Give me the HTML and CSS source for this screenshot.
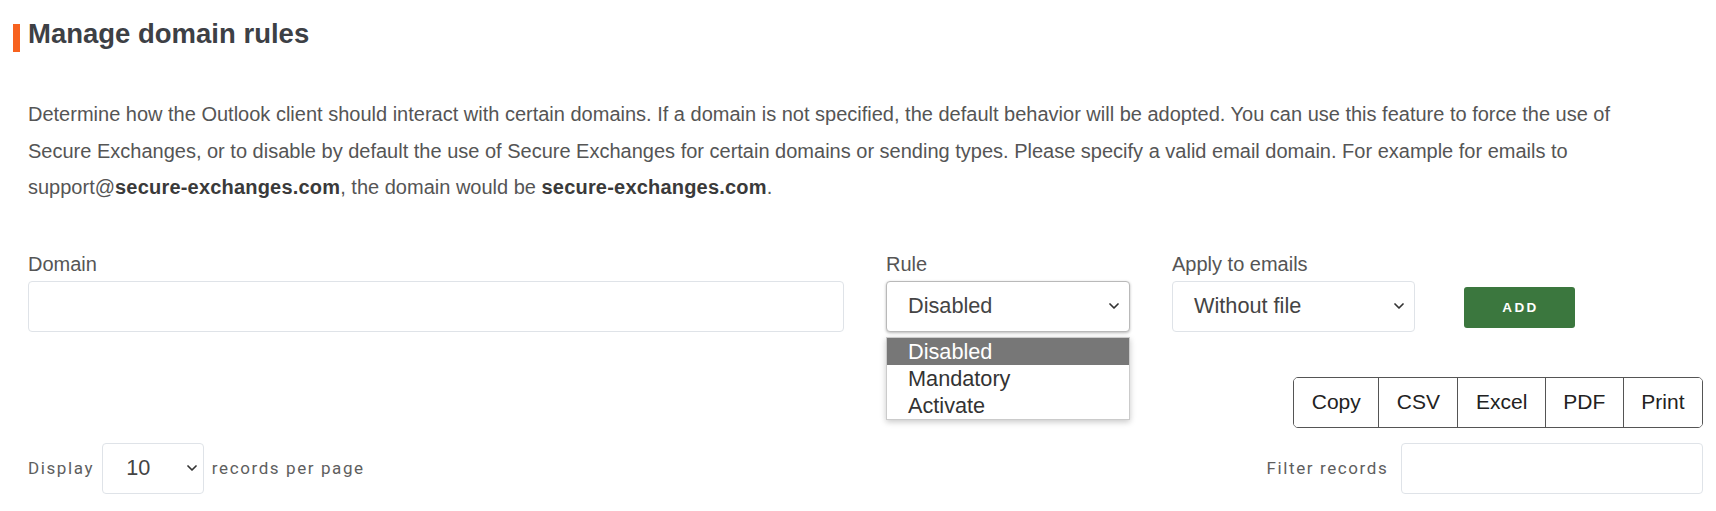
FILE: index.html
```html
<!DOCTYPE html>
<html lang="en">
<head>
<meta charset="utf-8">
<title>Manage domain rules</title>
<link rel="stylesheet" href="styles.css">
</head>
<body>
<div class="page">
  <h2 class="title">Manage domain rules</h2>
  <p class="intro">Determine how the Outlook client should interact with certain domains. If a domain is not specified, the default behavior will be adopted. You can use this feature to force the use of Secure Exchanges, or to disable by default the use of Secure Exchanges for certain domains or sending types. Please specify a valid email domain. For example for emails to support@<b>secure-exchanges.com</b>, the domain would be <b>secure-exchanges.com</b>.</p>

  <div class="form-row">
    <div class="field field-domain">
      <label class="label">Domain</label>
      <div class="input"></div>
    </div>
    <div class="field field-rule">
      <label class="label">Rule</label>
      <div class="select select-open">
        <span>Disabled</span>
        <svg class="chev" width="10" height="6" viewBox="0 0 10 6"><path d="M1 1 L5 5 L9 1" fill="none" stroke="#333" stroke-width="1.7" stroke-linecap="round" stroke-linejoin="round"/></svg>
      </div>
      <ul class="dropdown">
        <li class="active">Disabled</li>
        <li>Mandatory</li>
        <li>Activate</li>
      </ul>
    </div>
    <div class="field field-apply">
      <label class="label">Apply to emails</label>
      <div class="select">
        <span>Without file</span>
        <svg class="chev" width="10" height="6" viewBox="0 0 10 6"><path d="M1 1 L5 5 L9 1" fill="none" stroke="#333" stroke-width="1.7" stroke-linecap="round" stroke-linejoin="round"/></svg>
      </div>
    </div>
    <button class="btn-add">ADD</button>
  </div>

  <div class="export-row">
    <div class="btn-group">
      <button class="btn">Copy</button>
      <button class="btn">CSV</button>
      <button class="btn">Excel</button>
      <button class="btn">PDF</button>
      <button class="btn">Print</button>
    </div>
  </div>

  <div class="table-controls">
    <div class="length">
      <span>Display</span>
      <div class="select select-sm">
        <span>10</span>
        <svg class="chev" width="10" height="6" viewBox="0 0 10 6"><path d="M1 1 L5 5 L9 1" fill="none" stroke="#333" stroke-width="1.7" stroke-linecap="round" stroke-linejoin="round"/></svg>
      </div>
      <span>records per page</span>
    </div>
    <div class="filter">
      <span>Filter records</span>
      <div class="input input-filter"></div>
    </div>
  </div>
</div>
</body>
</html>
```

FILE: styles.css
```css
* { box-sizing: border-box; }

body {
  margin: 0;
  background: #fff;
  font-family: "Liberation Sans", Arial, sans-serif;
  color: #555;
}

.page {
  padding: 24px 13px 0 28px;
}

.title {
  margin: 0 0 0 -15px;
  padding: 0 0 8.5px 8px;
  border-left: 7px solid #f7621f;
  font-size: 27.5px;
  line-height: 19.5px;
  font-weight: bold;
  color: #3d4045;
}

.intro {
  margin: 44px 0 0;
  padding-right: 40px;
  font-size: 20px;
  line-height: 36.5px;
  color: #555;
}

.intro b {
  color: #3a3a3a;
  letter-spacing: 0.2px;
}

.form-row {
  margin-top: 46.5px;
  display: flex;
  align-items: flex-end;
}

.field {
  display: flex;
  flex-direction: column;
}

.label {
  display: block;
  font-size: 20px;
  line-height: 24px;
  margin-bottom: 4.5px;
  color: #555;
}

.field-domain { width: 816px; margin-right: 42px; }
.field-rule { width: 244px; margin-right: 42px; position: relative; }
.field-apply { width: 243px; margin-right: 49px; }

.input {
  height: 51px;
  border: 1px solid #dfe3e8;
  border-radius: 4px;
  background: #fff;
}

.select {
  height: 51px;
  border: 1px solid #dfe3e8;
  border-radius: 4px;
  background: #fff;
  display: flex;
  align-items: center;
  justify-content: space-between;
  padding: 0 10px 0 21px;
  font-size: 21.7px;
  color: #444;
}

.select-open {
  border-color: #b9b9b9;
  box-shadow: 0 1px 3px rgba(0, 0, 0, 0.28);
}

.chev { display: block; flex: none; }

.dropdown {
  position: absolute;
  top: calc(100% + 5px);
  left: 0;
  right: 0;
  margin: 0;
  padding: 0;
  list-style: none;
  background: #fff;
  border: 1px solid #cbcbcb;
  box-shadow: 0 2px 6px rgba(0, 0, 0, 0.22);
  z-index: 5;
}

.dropdown li {
  height: 27.3px;
  line-height: 27.3px;
  padding-left: 21px;
  font-size: 21.7px;
  color: #333;
}

.dropdown li.active {
  background: #777;
  color: #fff;
}

.btn-add {
  width: 111px;
  height: 40.5px;
  margin-bottom: 4px;
  border: none;
  border-radius: 3px;
  background: #3b773e;
  color: #fff;
  font-family: "Liberation Sans", Arial, sans-serif;
  font-weight: bold;
  font-size: 13.5px;
  letter-spacing: 2.4px;
  padding: 0 0 0 2px;
}

.export-row {
  margin-top: 45px;
  display: flex;
  justify-content: flex-end;
}

.btn-group {
  display: flex;
  height: 51px;
  border: 1px solid #555;
  border-radius: 5px;
  overflow: hidden;
}

.btn {
  border: none;
  border-left: 1px solid #555;
  background: #fff;
  padding: 0 17.5px;
  font-family: "Liberation Sans", Arial, sans-serif;
  font-size: 21px;
  color: #222;
}

.btn:first-child { border-left: none; }

.table-controls {
  margin-top: 15px;
  display: flex;
  justify-content: space-between;
  align-items: center;
}

.length,
.filter {
  display: flex;
  align-items: center;
  font-family: Roboto, "Liberation Sans", sans-serif;
  font-size: 17px;
  letter-spacing: 1.6px;
  color: #5e5e5e;
}

.select-sm {
  width: 102px;
  margin: 0 7.7px 0 8px;
  padding: 0 6px 0 23px;
  font-family: "Liberation Sans", Arial, sans-serif;
  letter-spacing: 0;
  font-size: 21.7px;
  color: #444;
}

.input-filter {
  width: 302px;
  margin-left: 12.7px;
}
```
